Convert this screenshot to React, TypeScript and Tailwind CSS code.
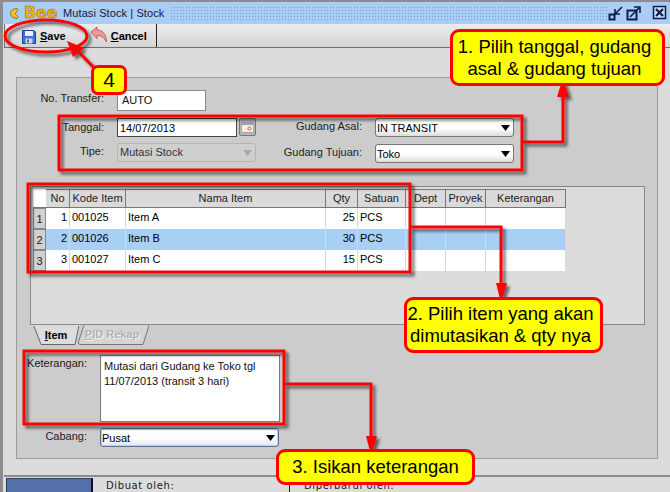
import React from "react";

const cols = [
  { t: "No", w: "w-[24px]" },
  { t: "Kode Item", w: "w-[56px]" },
  { t: "Nama Item", w: "w-[200px]" },
  { t: "Qty", w: "w-[32px]" },
  { t: "Satuan", w: "w-[48px]" },
  { t: "Dept", w: "w-[40px]" },
  { t: "Proyek", w: "w-[40px]" },
  { t: "Keterangan", w: "w-[80px]" },
];
const rows = [
  ["1", "001025", "Item A", "25", "PCS"],
  ["2", "001026", "Item B", "30", "PCS"],
  ["3", "001027", "Item C", "15", "PCS"],
];

function Arrow({ color = "black" }: { color?: string }) {
  return (
    <svg width="9" height="6" viewBox="0 0 9 6" className="shrink-0">
      <path d="M0 0H9L4.5 6Z" fill={color} />
    </svg>
  );
}

function Select({ value, className }: { value: string; className: string }) {
  return (
    <div className={"flex items-center justify-between pl-[1px] pr-[3px] rounded-[3px] border text-black " + className}>
      <span className="mt-px">{value}</span>
      <Arrow />
    </div>
  );
}

function Label({ children, w = "w-[87px]" }: { children: React.ReactNode; w?: string }) {
  return <div className={"text-right shrink-0 leading-[14px] text-[#222] " + w}>{children}</div>;
}

export default function App() {
  return (
    <div className="relative w-[670px] h-[492px] overflow-hidden flex flex-col bg-[#dcdcdc] border-l-[3px] border-[#8c8c8c] text-[11px] text-black font-['Liberation_Sans',Arial,sans-serif]">
      {/* title bar */}
      <div className="h-[24px] -ml-[3px] shrink-0 flex items-center bg-[#a9cdf5] border-t-2 border-[#8c8c8c] pl-[10px] pr-[2px]">
        <svg width="9" height="11" viewBox="0 0 9 11" className="shrink-0">
          <path d="M7 0.5 C3 0.5 0.5 3.5 0.5 5.5 C0.5 7.5 3 10.5 7 10.5 C9 9 7 7.5 5 5.5 C7 3.5 9 2 7 0.5Z" fill="#f8c21c" stroke="#6a5a20" strokeWidth="0.8" />
        </svg>
        <span className="ml-[5px] w-[39px] shrink-0 font-['DejaVu_Sans',sans-serif] font-bold text-[16px] leading-none tracking-[-0.2px] text-[#f7b512] [-webkit-text-stroke:0.5px_#9a6a10]">Bee</span>
        <span className="shrink-0 whitespace-nowrap tracking-[0.1px] text-[#10203a]">Mutasi Stock | Stock</span>
        <div className="ml-[6px] w-[438px] h-[15px] shrink-0 bg-[radial-gradient(#6f9bd0_1px,transparent_1px)] bg-[length:3px_3px]" />
        <svg width="60" height="16" viewBox="0 0 60 16" className="ml-auto shrink-0">
          <g fill="none" stroke="#0b1f4a">
            <rect x="1.5" y="9.5" width="5" height="5" strokeWidth="2" />
            <path d="M14 2 L7 9 M7 4 V9 H12" strokeWidth="1.6" />
            <rect x="19.5" y="5.5" width="9" height="9" strokeWidth="2" />
            <path d="M22 12 L31 3 M26 2 H32 V8" strokeWidth="1.6" />
            <rect x="45.5" y="1.5" width="12" height="12" strokeWidth="1.5" fill="#c9ddf5" />
            <path d="M48 4 L55 11 M55 4 L48 11" strokeWidth="2.2" />
          </g>
        </svg>
      </div>

      {/* toolbar */}
      <div className="h-[24px] shrink-0 ml-px flex items-stretch border-l border-b border-[#6f6f6f] bg-[linear-gradient(#ececec,#d4d4d4)]">
        <div className="w-[152px] flex items-center border-r border-[#222] pl-[17px] pt-[2px]">
          <svg width="14" height="14" viewBox="0 0 14 14" className="shrink-0">
            <path d="M0.5 0.5H12L13.5 2V13.5H0.5Z" fill="#3f6fd8" stroke="#1d3f90" />
            <rect x="3" y="1" width="8" height="5" fill="#e8eefc" />
            <rect x="3.5" y="8.5" width="7" height="5" fill="#cfd6e4" />
            <rect x="5" y="9.5" width="2" height="3" fill="#3f6fd8" />
          </svg>
          <span className="ml-[4px] font-bold"><span className="underline">S</span>ave</span>
          <svg width="18" height="18" viewBox="0 0 18 18" className="ml-[24px] -mt-[3px] shrink-0">
            <path d="M1 6 L7 1 L7 4 C12 4 16 7 16.5 16 C14 11 11 9.5 7 9.5 L7 12.5Z" fill="#ef9a9a" stroke="#b04848" strokeWidth="0.8" />
          </svg>
          <span className="ml-[3px] font-bold"><span className="underline">C</span>ancel</span>
        </div>
      </div>

      {/* main panel */}
      <div className="mt-[29px] ml-[13px] w-[642px] h-[382px] shrink-0 border border-[#9c9c9c] bg-[#cccccc] pt-[12px] flex flex-col">
        <div className="flex items-start gap-[13px]">
          <Label>
            <span className="block mt-[1px]">No. Transfer:</span>
          </Label>
          <div className="w-[89px] h-[21px] bg-white border border-[#8a8a8a] pl-[4px] leading-[19px] text-[#111]">AUTO</div>
        </div>

        <div className="mt-[7px] flex items-start">
          <Label>
            <span className="block mt-[2px]">Tanggal:</span>
          </Label>
          <div className="ml-[13px] w-[139px] flex gap-[2px]">
            <div className="w-[120px] h-[19px] bg-white border border-[#444] pl-[2px] leading-[18px]">14/07/2013</div>
            <div className="w-[17px] h-[18px] flex items-center justify-center rounded-[2px] border border-[#777] bg-[#b8b8b8]">
              <svg width="13" height="11" viewBox="0 0 13 11">
                <rect x="0.5" y="0.5" width="12" height="10" fill="#f4f0e4" stroke="#a8a8a8" />
                <rect x="1" y="1" width="11" height="2" fill="#8fa4bc" />
                <circle cx="8.5" cy="6.5" r="1.6" fill="none" stroke="#e85050" strokeWidth="1" />
              </svg>
            </div>
          </div>
          <Label w="w-[106px]">
            <span className="block mt-[1px]">Gudang Asal:</span>
          </Label>
          <Select value="IN TRANSIT" className="ml-[13px] w-[139px] h-[19px] border-[#777] bg-[linear-gradient(#ffffff,#ffffff_55%,#dcdcdc)]" />
        </div>

        <div className="mt-[6px] flex items-start">
          <Label>
            <span className="block mt-[1px]">Tipe:</span>
          </Label>
          <div className="ml-[13px] w-[139px] h-[19px] flex items-center justify-between rounded-[3px] border border-[#b4b4b4] bg-[#cfcfcf] pl-[2px] pr-[3px] text-[#333]">
            <span>Mutasi Stock</span>
            <Arrow color="#a8a8a8" />
          </div>
          <Label w="w-[106px]">
            <span className="block mt-[2px] whitespace-nowrap">Gudang Tujuan:</span>
          </Label>
          <Select value="Toko" className="mt-px ml-[13px] w-[139px] h-[19px] border-[#777] bg-[linear-gradient(#ffffff,#ffffff_55%,#dcdcdc)]" />
        </div>

        {/* table group */}
        <div className="mt-[23px] ml-[13px] w-[615px] h-[139px] shrink-0 border border-[#888] bg-[#dcdcdc] p-[2px]">
          <div className="flex h-[19px] w-[533px] border-b border-[#777]">
            <div className="w-[13px] bg-white shrink-0" />
            {cols.map((c) => (
              <div key={c.t} className={"shrink-0 text-center leading-[17px] whitespace-nowrap bg-[#dadada] border-r border-t border-[#777] text-[#222] " + c.w}>
                {c.t}
              </div>
            ))}
          </div>
          {rows.map((r, i) => (
            <div key={r[0]} className={"flex h-[21px] w-[533px] " + (i === 1 ? "bg-[#a9cff5]" : "bg-white")}>
              <div className="w-[13px] shrink-0 bg-[#d0d0d0] border border-[#888] text-center leading-[20px] text-[#222]">{r[0]}</div>
              {cols.map((c, j) => (
                <div
                  key={c.t}
                  className={
                    "shrink-0 border-r border-[#d8d8d8] leading-[18px] px-[1px] whitespace-nowrap " +
                    c.w +
                    (j === 0 || j === 3 ? " text-right pr-[2px]" : " pl-[2px]")
                  }
                >
                  {r[j]}
                </div>
              ))}
            </div>
          ))}
        </div>

        {/* tabs */}
        <div className="ml-[16px] flex h-[20px] shrink-0">
          <div className="relative w-[47px] h-[20px] font-bold text-center">
            <svg width="47" height="20" className="absolute inset-0" viewBox="0 0 47 20">
              <path d="M0.5 0 L8 19.5 H42 L46 0" fill="#dcdcdc" stroke="#666" />
              <path d="M0 0 H47" stroke="#dcdcdc" strokeWidth="2" />
            </svg>
            <span className="relative leading-[21px] -ml-[1px]"><span className="underline">I</span>tem</span>
          </div>
          <div className="relative -ml-[3px] w-[74px] h-[20px] font-bold text-center">
            <svg width="74" height="20" className="absolute inset-0" viewBox="0 0 74 20">
              <path d="M7 0.5 L1 18 L3 19.5 H66 L72 0.5" fill="#d4d4d4" stroke="#777" />
            </svg>
            <span className="relative leading-[19px] -ml-[4px] text-[#b2b2b2] [text-shadow:1px_1px_0_#f4f4f4]"><span className="underline">P</span>ID Rekap</span>
          </div>
        </div>

        {/* keterangan */}
        <div className="mt-[10px] flex items-start gap-[13px]">
          <Label w="w-[70px]">
            <span className="block mt-[1px]">Keterangan:</span>
          </Label>
          <div className="w-[180px] h-[67px] bg-white border border-[#777] px-[3px] pt-[3px] leading-[15px] text-[#111] whitespace-nowrap">
            Mutasi dari Gudang ke Toko tgl
            <br />
            11/07/2013 (transit 3 hari)
          </div>
        </div>
        <div className="mt-[6px] flex items-start gap-[13px]">
          <Label w="w-[70px]">
            <span className="block mt-[1px]">Cabang:</span>
          </Label>
          <Select value="Pusat" className="w-[179px] h-[19px] border-[#5f7294] bg-[linear-gradient(#ffffff,#ffffff_55%,#e0e4ec)] shadow-[inset_0_0_0_1px_#bcd0ee]" />
        </div>
      </div>

      {/* status bar */}
      <div className="mt-[16px] ml-px flex-1 flex border-t-2 border-[#8c8c8c] bg-[#dcdcdc]">
        <div className="w-[87px] mt-px ml-[2px] shrink-0 bg-[#5470a8] border-t border-l border-[#2b3f66] border-r-2 border-r-[#111]" />
        <div className="w-[197px] pl-[13px] pt-[2px] leading-[14px] tracking-[0.6px] text-[#222] font-['DejaVu_Sans',sans-serif] text-[10px] shrink-0 border-r border-[#222]">Dibuat oleh:</div>
        <div className="pl-[14px] pt-[2px] leading-[14px] tracking-[0.6px] text-[#222] font-['DejaVu_Sans',sans-serif] text-[10px] whitespace-nowrap">Diperbarui oleh:</div>
      </div>

      {/* annotation drawing */}
      <svg width="670" height="492" viewBox="0 0 670 492" className="absolute top-0 -left-[3px] pointer-events-none">
        <defs>
          <filter id="sh" x="-10%" y="-10%" width="120%" height="120%">
            <feDropShadow dx="3" dy="3" stdDeviation="1.8" floodColor="#000" floodOpacity="0.55" />
          </filter>
        </defs>
        <g filter="url(#sh)" fill="none" stroke="#ff0000" strokeWidth="3">
          <ellipse cx="46" cy="36" rx="41" ry="16" />
          <rect x="59" y="116" width="463" height="54" />
          <rect x="28" y="184" width="382" height="88" />
          <rect x="24" y="351" width="260" height="73" />
          <path d="M523 142 H563 V92" />
          <path d="M410 227 H501 V288" />
          <path d="M285 384 H371 V440" />
          <path d="M100 74 L74 47" />
          <path d="M563 78 L569 97 H557Z" fill="#ff0000" stroke="none" />
          <path d="M501 303 L507 283 H496Z" fill="#ff0000" stroke="none" />
          <path d="M371 455 L377 436 H366Z" fill="#ff0000" stroke="none" />
          <path d="M67 41 L84 48 L73 57Z" fill="#ff0000" stroke="none" />
        </g>
      </svg>

      {/* callouts */}
      <div className="absolute -left-[3px] top-0 w-[670px] h-[492px] pointer-events-none text-[18.5px] leading-[22px] text-black">
        <div className="absolute left-[450px] top-[29px] w-[215px] h-[57px] rounded-[9px] border-[3px] border-[#ff0000] bg-[#ffff00] flex items-center justify-center text-center pr-[6px] whitespace-nowrap">
          <span>1. Pilih tanggal, gudang<br />asal &amp; gudang tujuan</span>
        </div>
        <div className="absolute left-[404px] top-[297px] w-[199px] h-[56px] rounded-[9px] border-[3px] border-[#ff0000] bg-[#ffff00] flex items-center justify-center text-center pr-[6px] whitespace-nowrap">
          <span>2. Pilih item yang akan<br />dimutasikan &amp; qty nya</span>
        </div>
        <div className="absolute left-[276px] top-[449px] w-[199px] h-[36px] rounded-[9px] border-[3px] border-[#ff0000] bg-[#ffff00] flex items-center justify-center whitespace-nowrap">
          3. Isikan keterangan
        </div>
        <div className="absolute left-[91px] top-[65px] w-[36px] h-[30px] rounded-[7px] border-[3px] border-[#ff0000] bg-[#ffff00] flex items-center justify-center text-[21px]">
          4
        </div>
      </div>
    </div>
  );
}
